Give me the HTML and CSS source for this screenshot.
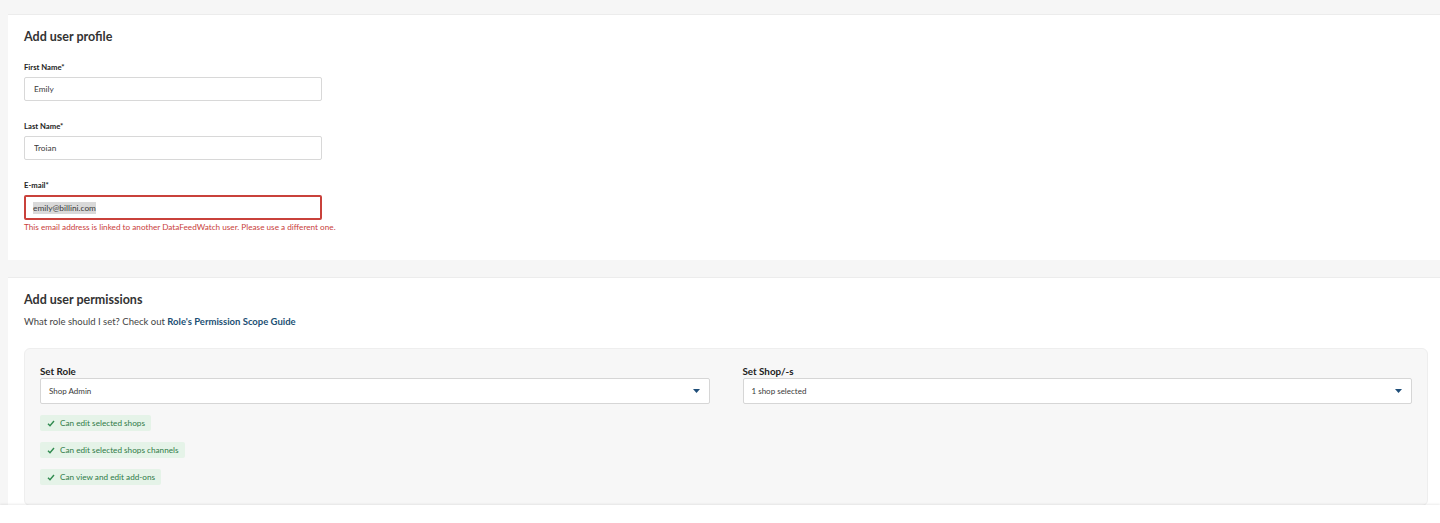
FILE: index.html
```html
<!DOCTYPE html>
<html lang="en">
<head>
    <meta charset="UTF-8">
    <meta name="viewport" content="width=device-width, initial-scale=1.0">
    <title>Add user - DataFeedWatch</title>
    <link rel="stylesheet" href="styles.css">
</head>
<body>
    <div class="page">
        <section class="card profile-card">
            <h2>Add user profile</h2>

            <div class="field">
                <label for="firstName">First Name*</label>
                <input type="text" id="firstName" class="text-input" value="Emily">
            </div>

            <div class="field">
                <label for="lastName">Last Name*</label>
                <input type="text" id="lastName" class="text-input" value="Troian">
            </div>

            <div class="field has-error">
                <label for="email">E-mail*</label>
                <div class="text-input error-input"><span class="selected-text">emily@billini.com</span></div>
                <p class="error-text">This email address is linked to another DataFeedWatch user. Please use a different one.</p>
            </div>
        </section>

        <section class="card permissions-card">
            <h2>Add user permissions</h2>
            <p class="hint">What role should I set? Check out <a href="#">Role's Permission Scope Guide</a></p>

            <div class="role-box">
                <div class="role-row">
                    <div class="select-field">
                        <label>Set Role</label>
                        <div class="select">
                            <span>Shop Admin</span>
                            <svg class="caret" width="7" height="4" viewBox="0 0 7 4"><path d="M0 0h7L3.5 4z" fill="#1f4e79"/></svg>
                        </div>
                    </div>
                    <div class="select-field">
                        <label>Set Shop/-s</label>
                        <div class="select">
                            <span>1 shop selected</span>
                            <svg class="caret" width="7" height="4" viewBox="0 0 7 4"><path d="M0 0h7L3.5 4z" fill="#1f4e79"/></svg>
                        </div>
                    </div>
                </div>

                <ul class="perm-list">
                    <li class="perm"><svg width="8" height="7" viewBox="0 0 8 7"><path d="M1 3.8l2 2L7 1" fill="none" stroke="#2f8a4e" stroke-width="1.4"/></svg>Can edit selected shops</li>
                    <li class="perm"><svg width="8" height="7" viewBox="0 0 8 7"><path d="M1 3.8l2 2L7 1" fill="none" stroke="#2f8a4e" stroke-width="1.4"/></svg>Can edit selected shops channels</li>
                    <li class="perm"><svg width="8" height="7" viewBox="0 0 8 7"><path d="M1 3.8l2 2L7 1" fill="none" stroke="#2f8a4e" stroke-width="1.4"/></svg>Can view and edit add-ons</li>
                </ul>
            </div>
        </section>
    </div>

    <div class="footer-bar"></div>
</body>
</html>
```

FILE: styles.css
```css
* {
    margin: 0;
    padding: 0;
    box-sizing: border-box;
}

body {
    font-family: Lato, "Liberation Sans", sans-serif;
    background: #f6f6f6;
    color: #333;
    height: 523px;
    overflow: hidden;
}

.page {
    padding: 14px 0 0 8px;
    display: flex;
    flex-direction: column;
    gap: 17px;
}

.card {
    background: #fff;
    border-top: 1px solid #ececec;
    padding: 15px 12px 16px 16px;
}

.card h2 {
    font-size: 12.5px;
    font-weight: 700;
    color: #333;
    line-height: 14px;
}

/* profile form */
.profile-card {
    height: 246px;
}

.profile-card h2 {
    margin-bottom: 19px;
}

.field {
    margin-bottom: 21px;
}

.field label {
    display: block;
    font-size: 7.7px;
    font-weight: 700;
    color: #222;
    line-height: 9px;
    margin-bottom: 5px;
}

.text-input {
    display: flex;
    align-items: center;
    width: 298px;
    height: 24px;
    padding: 0 9px;
    border: 1px solid #d8d8d8;
    border-radius: 2px;
    font-family: inherit;
    font-size: 8.3px;
    color: #3a3a3a;
    background: #fff;
    outline: none;
}

.error-input {
    height: 25px;
    border: 2px solid #c9413b;
    padding: 0 7px;
}

.selected-text {
    background: #d9d9d9;
    padding: 1px 0;
}

.error-text {
    margin-top: 3px;
    font-size: 8.2px;
    color: #c9413b;
    line-height: 9px;
}

/* permissions */
.permissions-card {
    padding-top: 15px;
    flex: 1;
}

.permissions-card h2 {
    margin-bottom: 10px;
}

.hint {
    font-size: 9.5px;
    color: #444;
    line-height: 10px;
    margin-bottom: 21px;
}

.hint a {
    color: #1c4f74;
    font-weight: 700;
    text-decoration: none;
}

.role-box {
    background: #f7f7f7;
    border: 1px solid #eeeeee;
    border-radius: 6px;
    padding: 17px 15px 20px 15px;
}

.role-row {
    display: flex;
    gap: 33px;
}

.select-field {
    flex: 1;
}

.select-field label {
    display: block;
    font-size: 9.8px;
    font-weight: 700;
    color: #222;
    line-height: 10px;
    margin-bottom: 2px;
}

.select {
    display: flex;
    align-items: center;
    justify-content: space-between;
    height: 26px;
    padding: 0 9px 0 8px;
    background: #fff;
    border: 1px solid #d6d6d6;
    border-radius: 2px;
    font-size: 8px;
    color: #3a3a3a;
}

.perm-list {
    list-style: none;
    display: flex;
    flex-direction: column;
    align-items: flex-start;
    gap: 11px;
    margin-top: 11px;
}

.perm {
    display: flex;
    align-items: center;
    gap: 5px;
    height: 16px;
    padding: 0 6px 0 7px;
    background: #e5f3e8;
    border-radius: 2px;
    font-size: 8.2px;
    color: #2f7a47;
}

.footer-bar {
    position: fixed;
    left: 0;
    right: 0;
    bottom: 0;
    height: 18px;
    background: #fff;
    box-shadow: 0 -1px 2px rgba(0, 0, 0, 0.08);
}
```
